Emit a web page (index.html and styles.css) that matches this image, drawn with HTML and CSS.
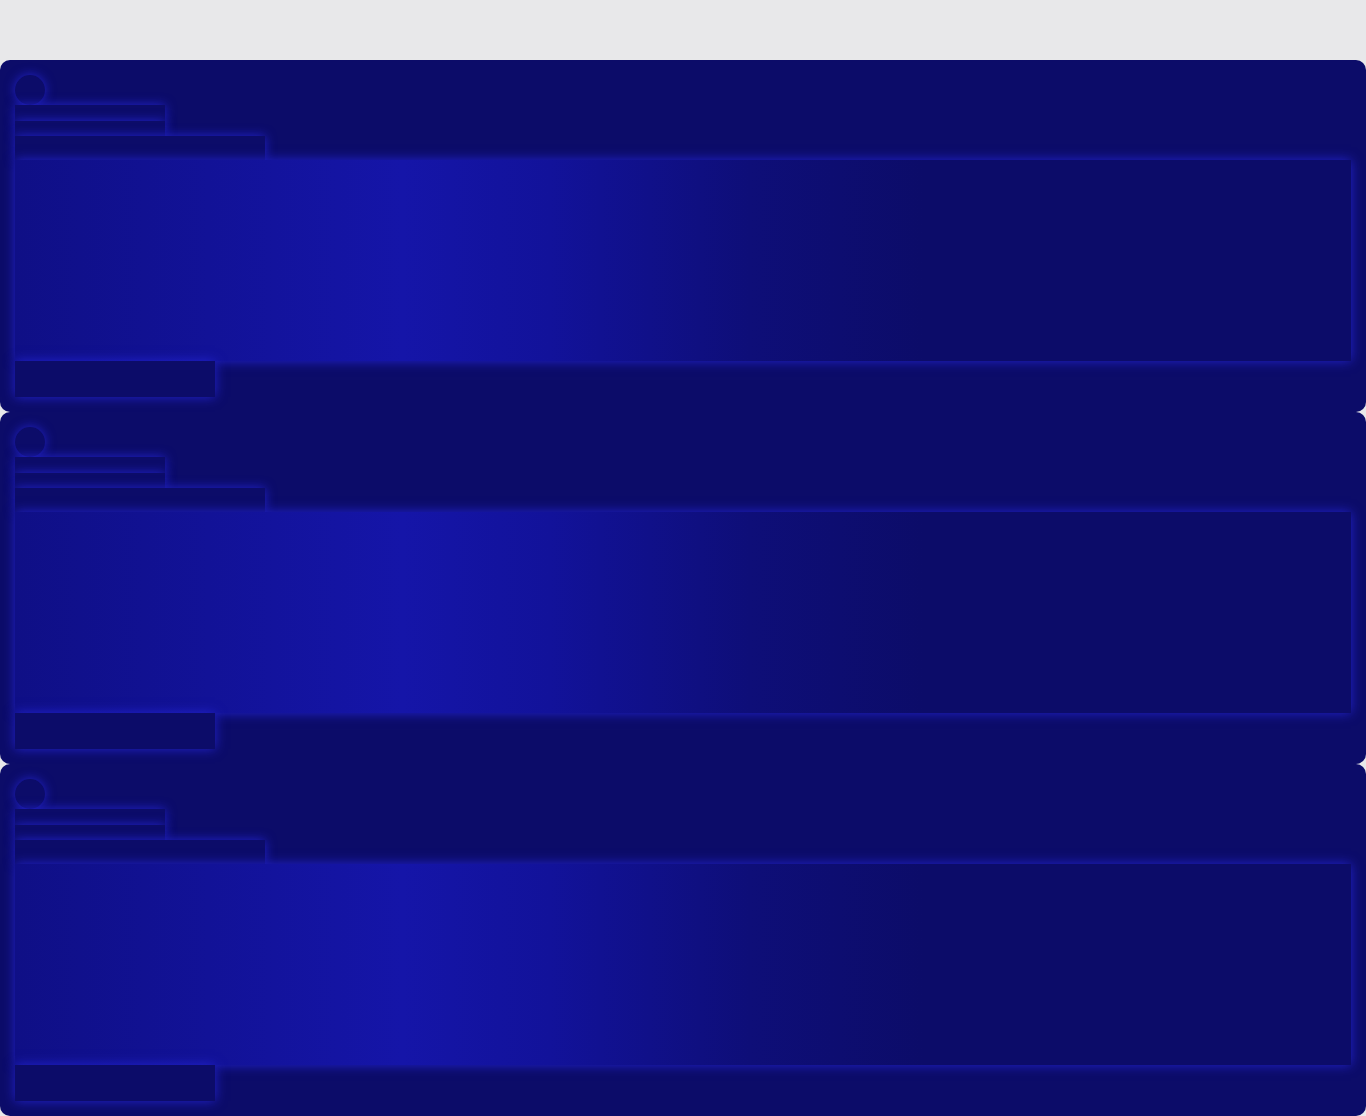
FILE: index.html
```html
<!DOCTYPE html>
<html>
<head>
<meta charset="utf-8">
<link rel="stylesheet" href="styles.css">
</head>
<body>
<main class="list">
  <section class="card">
    <div class="sk avatar"></div>
    <div class="sk line-a"></div>
    <div class="sk line-b"></div>
    <div class="sk line-c"></div>
    <div class="sk media"></div>
    <div class="sk button"></div>
  </section>
  <section class="card">
    <div class="sk avatar"></div>
    <div class="sk line-a"></div>
    <div class="sk line-b"></div>
    <div class="sk line-c"></div>
    <div class="sk media"></div>
    <div class="sk button"></div>
  </section>
  <section class="card">
    <div class="sk avatar"></div>
    <div class="sk line-a"></div>
    <div class="sk line-b"></div>
    <div class="sk line-c"></div>
    <div class="sk media"></div>
    <div class="sk button"></div>
  </section>
</main>
</body>
</html>
```
FILE: styles.css
```css
html, body {
  margin: 0;
  padding: 0;
  background: #e8e8ea;
  font-family: "Liberation Sans", Arial, sans-serif;
}
.list {
  padding-top: 60px;
  display: flex;
  flex-direction: column;
}
.card {
  height: 352px;
  box-sizing: border-box;
  padding: 15px;
  background: #0c0c69;
  border-radius: 10px;
  overflow: hidden;
  display: flex;
  flex-direction: column;
  align-items: flex-start;
}
.sk {
  background: #0c0c69;
  box-shadow: 0 0 11px rgba(36, 36, 210, 0.95);
  flex: none;
}
.avatar {
  width: 30px;
  height: 30px;
  border-radius: 50%;
}
.line-a {
  width: 150px;
  height: 16px;
}
.line-b {
  width: 150px;
  height: 15px;
}
.line-c {
  width: 250px;
  height: 24px;
}
.media {
  width: 100%;
  height: 201px;
  background: linear-gradient(90deg, #0f0f86 0%, #1515a8 29%, #12129a 40%, #0e0e78 55%, #0c0c69 68%, #0c0c69 100%);
}
.button {
  width: 200px;
  height: 36px;
}
```
